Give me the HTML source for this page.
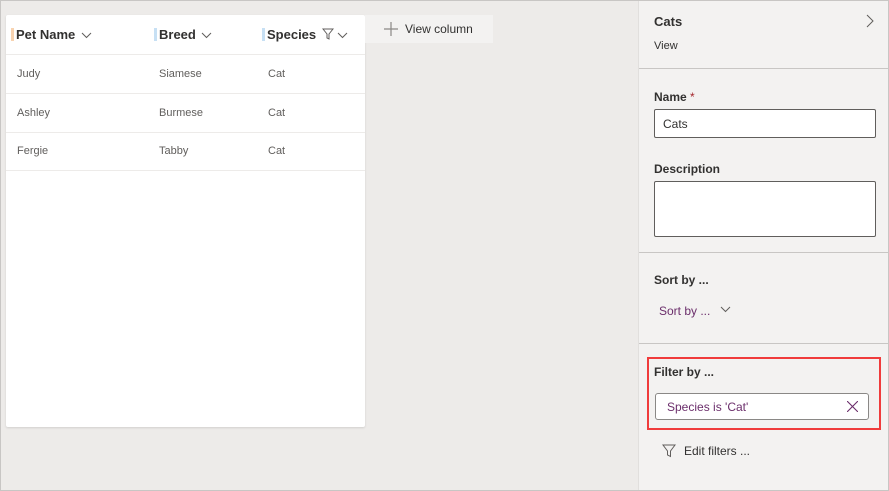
<!DOCTYPE html>
<html><head><style>
*{box-sizing:border-box;margin:0;padding:0}
body{width:889px;height:491px;overflow:hidden;background:#edebe9;font-family:"Segoe UI","Liberation Sans",sans-serif;position:relative;color:#323130}
.frame{position:absolute;left:0;top:0;width:889px;height:491px;border:1px solid #c8c6c4}
.grid{position:absolute;left:6px;top:15px;width:359px;height:412px;background:#fff;border-radius:2px;box-shadow:0 1px 2px rgba(0,0,0,.12)}
.hd{position:absolute;top:0;left:0;right:0;height:40px;border-bottom:1px solid #edebe9}
.h{position:absolute;top:12px;font-size:13px;font-weight:600;color:#323130;padding-left:5px}
.h:before{content:"";position:absolute;left:0;top:1px;width:3px;height:13px;background:#c7e0f4}
.h.o:before{background:#f8d3b0}
.row{position:absolute;left:0;right:0;height:39px;border-bottom:1px solid #edebe9;font-size:11px;color:#605e5c}
.row span{position:absolute;top:13px}
.vc{position:absolute;left:365px;top:15px;width:128px;height:28px;background:#f3f2f1;font-size:12px;color:#323130}
.panel{position:absolute;left:638px;top:1px;width:250px;height:489px;background:#f3f2f1;border-left:1px solid #e1dfdd}
.sep{position:absolute;left:0;right:0;height:1px;background:#c8c6c4}
.lbl{position:absolute;left:15px;font-size:12px;font-weight:600;color:#323130}
.inp{position:absolute;left:15px;width:222px;background:#fff;border:1px solid #605e5c;border-radius:2px;font-size:12px}
</style></head><body>
<div class="grid">
 <div class="hd">
  <div class="h o" style="left:5px">Pet Name <svg width="11" height="7" style="margin-left:2px"><path d="M1 1l4.5 4.5L10 1" fill="none" stroke="#605e5c"/></svg></div>
  <div class="h" style="left:148px">Breed <svg width="11" height="7" style="margin-left:2px"><path d="M1 1l4.5 4.5L10 1" fill="none" stroke="#605e5c"/></svg></div>
  <div class="h" style="left:256px">Species <svg width="12" height="12" style="margin-left:2px;vertical-align:-1px"><path d="M1 1h10L7 6v5L5 10V6z" fill="none" stroke="#605e5c"/></svg><svg width="11" height="7" style="margin-left:3px"><path d="M1 1l4.5 4.5L10 1" fill="none" stroke="#605e5c"/></svg></div>
 </div>
 <div class="row" style="top:40px"><span style="left:11px">Judy</span><span style="left:153px">Siamese</span><span style="left:262px">Cat</span></div>
 <div class="row" style="top:79px"><span style="left:11px">Ashley</span><span style="left:153px">Burmese</span><span style="left:262px">Cat</span></div>
 <div class="row" style="top:117px"><span style="left:11px">Fergie</span><span style="left:153px">Tabby</span><span style="left:262px">Cat</span></div>
</div>
<div class="vc"><svg width="14" height="14" style="position:absolute;left:19px;top:7px"><path d="M7 0v14M0 7h14" stroke="#8a8886" stroke-width="1.2"/></svg><span style="position:absolute;left:40px;top:7px">View column</span></div>
<div class="panel">
 <div style="position:absolute;left:15px;top:13px;font-size:13px;font-weight:600">Cats</div>
 <svg width="8" height="14" style="position:absolute;left:227px;top:13px"><path d="M1 1l6 6-6 6" fill="none" stroke="#605e5c"/></svg>
 <div style="position:absolute;left:15px;top:39px;font-size:11px">View</div>
 <div class="sep" style="top:67px"></div>
 <div class="lbl" style="top:89px">Name <span style="color:#a4262c;font-weight:400">*</span></div>
 <div class="inp" style="top:108px;height:29px"><span style="position:absolute;left:8px;top:7px">Cats</span></div>
 <div class="lbl" style="top:161px">Description</div>
 <div class="inp" style="top:180px;height:56px"></div>
 <div class="sep" style="top:251px"></div>
 <div class="lbl" style="top:272px">Sort by ...</div>
 <div style="position:absolute;left:20px;top:303px;font-size:12px;color:#6b2e6b">Sort by ... <svg width="11" height="7" style="margin-left:6px;vertical-align:2px"><path d="M1 1l4.5 4.5L10 1" fill="none" stroke="#605e5c"/></svg></div>
 <div class="sep" style="top:342px"></div>
 <div style="position:absolute;left:8px;top:356px;width:234px;height:73px;border:2px solid #f03c3c"></div>
 <div class="lbl" style="top:364px">Filter by ...</div>
 <div style="position:absolute;left:16px;top:392px;width:214px;height:27px;background:#fff;border:1px solid #8a8886;border-radius:3px;font-size:12px;color:#6b2e6b"><span style="position:absolute;left:11px;top:6px">Species is 'Cat'</span><svg width="11" height="11" style="position:absolute;left:191px;top:7px"><path d="M0 0l11 11M11 0L0 11" stroke="#6b2e6b" stroke-width="1.1"/></svg></div>
 <svg width="14" height="14" style="position:absolute;left:23px;top:443px"><path d="M1 1h12L8.5 7v5.5L5.5 11V7z" fill="none" stroke="#605e5c"/></svg>
 <div style="position:absolute;left:45px;top:443px;font-size:12px">Edit filters ...</div>
</div>
<div class="frame"></div>
</body></html>
